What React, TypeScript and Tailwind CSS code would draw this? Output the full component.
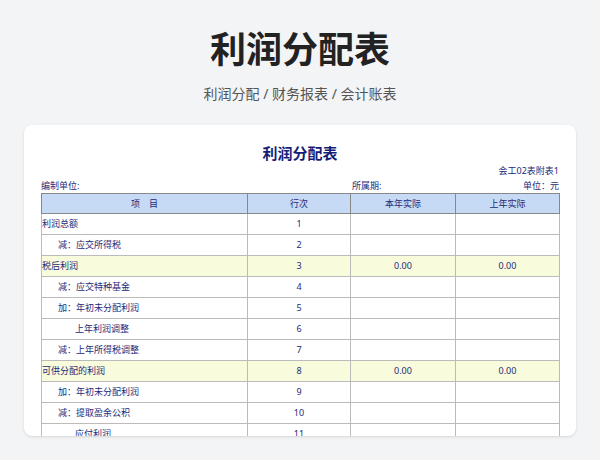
const rows: [string, number, string, boolean][] = [
  ["利润总额", 0, "1", false],
  ["减：应交所得税", 1, "2", false],
  ["税后利润", 0, "3", true],
  ["减：应交特种基金", 1, "4", false],
  ["加：年初未分配利润", 1, "5", false],
  ["上年利润调整", 2, "6", false],
  ["减：上年所得税调整", 1, "7", false],
  ["可供分配的利润", 0, "8", true],
  ["加：年初未分配利润", 1, "9", false],
  ["减：提取盈余公积", 1, "10", false],
  ["应付利润", 2, "11", false],
  ["未分配利润", 0, "12", true],
];

export default function App() {
  return (
    <div
      className="w-[600px] h-[460px] bg-[#f3f4f6] flex flex-col items-center overflow-hidden"
      style={{ fontFamily: '"Noto Sans", "Noto Sans CJK SC", sans-serif' }}
    >
      <h1 className="mt-[26px] text-[36px] leading-[48px] font-bold text-[#222]">利润分配表</h1>
      <p className="mt-[10px] text-[14px] leading-[20px] text-[#555]">利润分配 / 财务报表 / 会计账表</p>
      <div className="mt-[21px] w-[552px] h-[311px] bg-white rounded-lg shadow-sm overflow-hidden px-[17px] text-[#1e2a78]">
        <div className="mt-[18px] text-center text-[15px] leading-[20px] font-bold text-[#141e78]">利润分配表</div>
        <div className="mt-[2px] text-right text-[9px] leading-[12px]">会工02表附表1</div>
        <div className="flex text-[9px] leading-[12px] mt-[3px]">
          <span className="w-[311px]">编制单位:</span>
          <span className="flex-1">所属期:</span>
          <span>单位：元</span>
        </div>
        <table className="mt-[1px] w-[518px] border-collapse text-[9px] table-fixed">
          <colgroup>
            <col className="w-[206px]" />
            <col className="w-[103px]" />
            <col className="w-[105px]" />
            <col className="w-[104px]" />
          </colgroup>
          <thead>
            <tr className="h-[20px] bg-[#c6d9f5]">
              {["项　目", "行次", "本年实际", "上年实际"].map((h) => (
                <th key={h} className="border border-[#888] font-normal">{h}</th>
              ))}
            </tr>
          </thead>
          <tbody>
            {rows.map(([name, indent, n, hl]) => (
              <tr key={n} className={`h-[21px] ${hl ? "bg-[#f8fbdc]" : ""}`}>
                <td className={`border border-[#bbb] ${indent === 0 ? "pl-0" : indent === 1 ? "pl-[16px]" : "pl-[33px]"}`}>{name}</td>
                <td className="border border-[#bbb] text-center">{n}</td>
                <td className="border border-[#bbb] text-center">{hl ? "0.00" : ""}</td>
                <td className="border border-[#bbb] text-center">{hl ? "0.00" : ""}</td>
              </tr>
            ))}
          </tbody>
        </table>
      </div>
    </div>
  );
}
